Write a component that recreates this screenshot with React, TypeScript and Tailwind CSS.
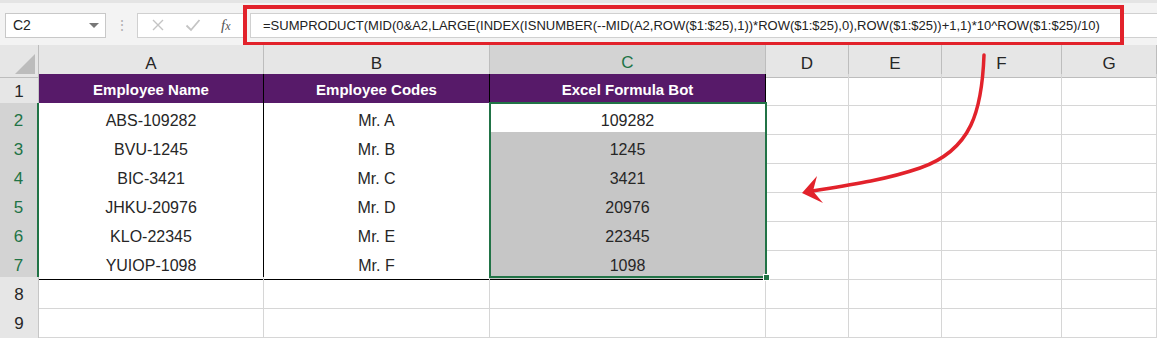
import React from 'react';

// --- 数据 ---
const COLS = ['A', 'B', 'C', 'D', 'E', 'F', 'G'];
const ROWS = [
  { name: 'ABS-109282', code: 'Mr. A', bot: '109282' },
  { name: 'BVU-1245', code: 'Mr. B', bot: '1245' },
  { name: 'BIC-3421', code: 'Mr. C', bot: '3421' },
  { name: 'JHKU-20976', code: 'Mr. D', bot: '20976' },
  { name: 'KLO-22345', code: 'Mr. E', bot: '22345' },
  { name: 'YUIOP-1098', code: 'Mr. F', bot: '1098' },
];
const FORMULA =
  '=SUMPRODUCT(MID(0&A2,LARGE(INDEX(ISNUMBER(--MID(A2,ROW($1:$25),1))*ROW($1:$25),0),ROW($1:$25))+1,1)*10^ROW($1:$25)/10)';

const GRID = 'grid grid-cols-[39px_225px_226px_276px_83px_93px_120px_95px_2px]';
const FONT = { fontFamily: '"Liberation Sans", Arial, sans-serif' };

// --- 顶部公式栏 ---
const FormulaBar: React.FC = () => (
  <div className="relative h-[45px] bg-[#f3f3f3] border-t-[3px] border-[#e4e4e4] flex items-center pt-[2px]">
    {/* 名称框 */}
    <div className="ml-[5px] w-[101px] h-[25px] bg-white border border-[#c8c8c8] flex items-center justify-between pl-[7px] pr-[6px]">
      <span className="text-[14px] text-[#222] pt-[1px]">C2</span>
      <span className="w-0 h-0 border-l-[5px] border-r-[5px] border-t-[5px] border-l-transparent border-r-transparent border-t-[#777]" />
    </div>
    <div className="w-[31px] flex justify-center text-[#b0b0b0] text-[14px] leading-none">⋮</div>
    {/* 按钮 */}
    <div className="w-[110px] h-[25px] bg-white border border-[#d0d0d0] flex items-center">
      <svg width="14" height="14" viewBox="0 0 14 14" className="ml-[13px]" stroke="#c4c4c4" strokeWidth="1.4" fill="none">
        <path d="M2 2 L12 12 M12 2 L2 12" />
      </svg>
      <svg width="16" height="14" viewBox="0 0 16 14" className="ml-[20px]" stroke="#c4c4c4" strokeWidth="1.8" fill="none">
        <path d="M1.5 7.5 L6 12 L14.5 2" />
      </svg>
      <span className="ml-[20px] text-[15px] italic text-[#555]" style={{ fontFamily: '"Liberation Serif", serif' }}>
        f<span className="text-[12px]">x</span>
      </span>
    </div>
    {/* 输入框 */}
    <div className="ml-[3px] flex-1 h-[25px] bg-white border-y border-l border-[#d0d0d0] flex items-center pl-[12px]">
      <span className="text-[13px] text-[#222] whitespace-nowrap pt-[2px]">{FORMULA}</span>
    </div>
    {/* 红框标注 */}
    <div className="absolute left-[243px] top-[2px] w-[881px] h-[41px] border-[4px] border-[#e2222b]" />
  </div>
);

// --- 表格 ---
const Sheet: React.FC = () => {
  const gridCell = 'border-r border-b border-[#d6d6d6]';
  const dataCell = 'border-r border-b border-black flex items-center justify-center text-[16px] text-[#262626] pt-[6px]';
  return (
    <div className="relative">
      {/* 列标题 */}
      <div className={`${GRID} h-[29px]`}>
        <div className="bg-[#e6e6e6] border-r border-b border-[#bdbdbd] relative">
          <div className="absolute right-[3px] bottom-[3px] w-0 h-0 border-l-[20px] border-l-transparent [border-bottom:20px_solid_#bcbcbc]" />
        </div>
        {COLS.map(c => (
          <div
            key={c}
            className={`flex items-center justify-center text-[17px] border-r pt-[5px] ${
              c === 'C'
                ? 'bg-[#d3d3d3] text-[#217346] border-b-2 border-b-[#217346] border-r-[#bdbdbd]'
                : 'bg-[#e6e6e6] text-[#262626] border-b border-[#bdbdbd]'
            }`}
          >
            {c}
          </div>
        ))}
        <div className="bg-[#e6e6e6] border-b border-[#bdbdbd]" />
      </div>

      {/* 第 1 行：表头 */}
      <div className={`${GRID} h-[29px]`}>
        <div className="bg-[#e6e6e6] border-r border-b border-[#c6c6c6] flex items-center justify-center text-[17px] text-[#262626] pt-[5px]">1</div>
        {['Employee Name', 'Employee Codes', 'Excel Formula Bot'].map(h => (
          <div key={h} className="bg-[#571a69] border-r border-b border-black flex items-center justify-center text-white font-bold text-[15px] pt-[2px]">
            {h}
          </div>
        ))}
        {[0, 1, 2, 3].map(i => <div key={i} className={gridCell} />)}
        <div />
      </div>

      {/* 数据行 */}
      {ROWS.map((r, i) => (
        <div key={r.name} className={`${GRID} h-[29px]`}>
          <div className="bg-[#d3d3d3] border-r-2 border-r-[#217346] border-b border-[#c0c0c0] flex items-center justify-center text-[17px] text-[#217346] pt-[5px]">
            {i + 2}
          </div>
          <div className={`bg-white ${dataCell}`}>{r.name}</div>
          <div className={`bg-white ${dataCell}`}>{r.code}</div>
          <div className={`${i === 0 ? 'bg-white' : 'bg-[#c6c6c6]'} ${dataCell}`}>{r.bot}</div>
          {[0, 1, 2, 3].map(k => <div key={k} className={gridCell} />)}
          <div />
        </div>
      ))}

      {/* 空行 8-9（以及被截断的第 10 行） */}
      {[8, 9, 0].map(n => (
        <div key={n} className={`${GRID} h-[29px]`}>
          <div className="bg-[#e6e6e6] border-r border-b border-[#c6c6c6] flex items-center justify-center text-[17px] text-[#262626] pt-[5px]">
            {n || ''}
          </div>
          {[0, 1, 2, 3, 4, 5, 6].map(k => <div key={k} className={gridCell} />)}
          <div />
        </div>
      ))}

      {/* 选区边框 + 填充柄 */}
      <div className="absolute left-[489px] top-[57px] w-[278px] h-[176px] border-2 border-[#217346] pointer-events-none" />
      <div className="absolute left-[763px] top-[229px] w-[7px] h-[7px] bg-[#217346] border border-white pointer-events-none" />
    </div>
  );
};

// --- 主组件 ---
const App: React.FC = () => (
  <div className="relative w-[1157px] h-[338px] overflow-hidden bg-white" style={FONT}>
    <FormulaBar />
    <Sheet />
    {/* 红色箭头 */}
    <svg className="absolute inset-0 pointer-events-none" width="1157" height="338" viewBox="0 0 1157 338">
      <path d="M984 55 C982 110 972 150 920 168 C885 180 850 185 812 191" stroke="#e2222b" strokeWidth="3.5" fill="none" strokeLinecap="round" />
      <polygon points="802,193 817,176 813,191 823,203" fill="#e2222b" />
    </svg>
  </div>
);

export default App;
